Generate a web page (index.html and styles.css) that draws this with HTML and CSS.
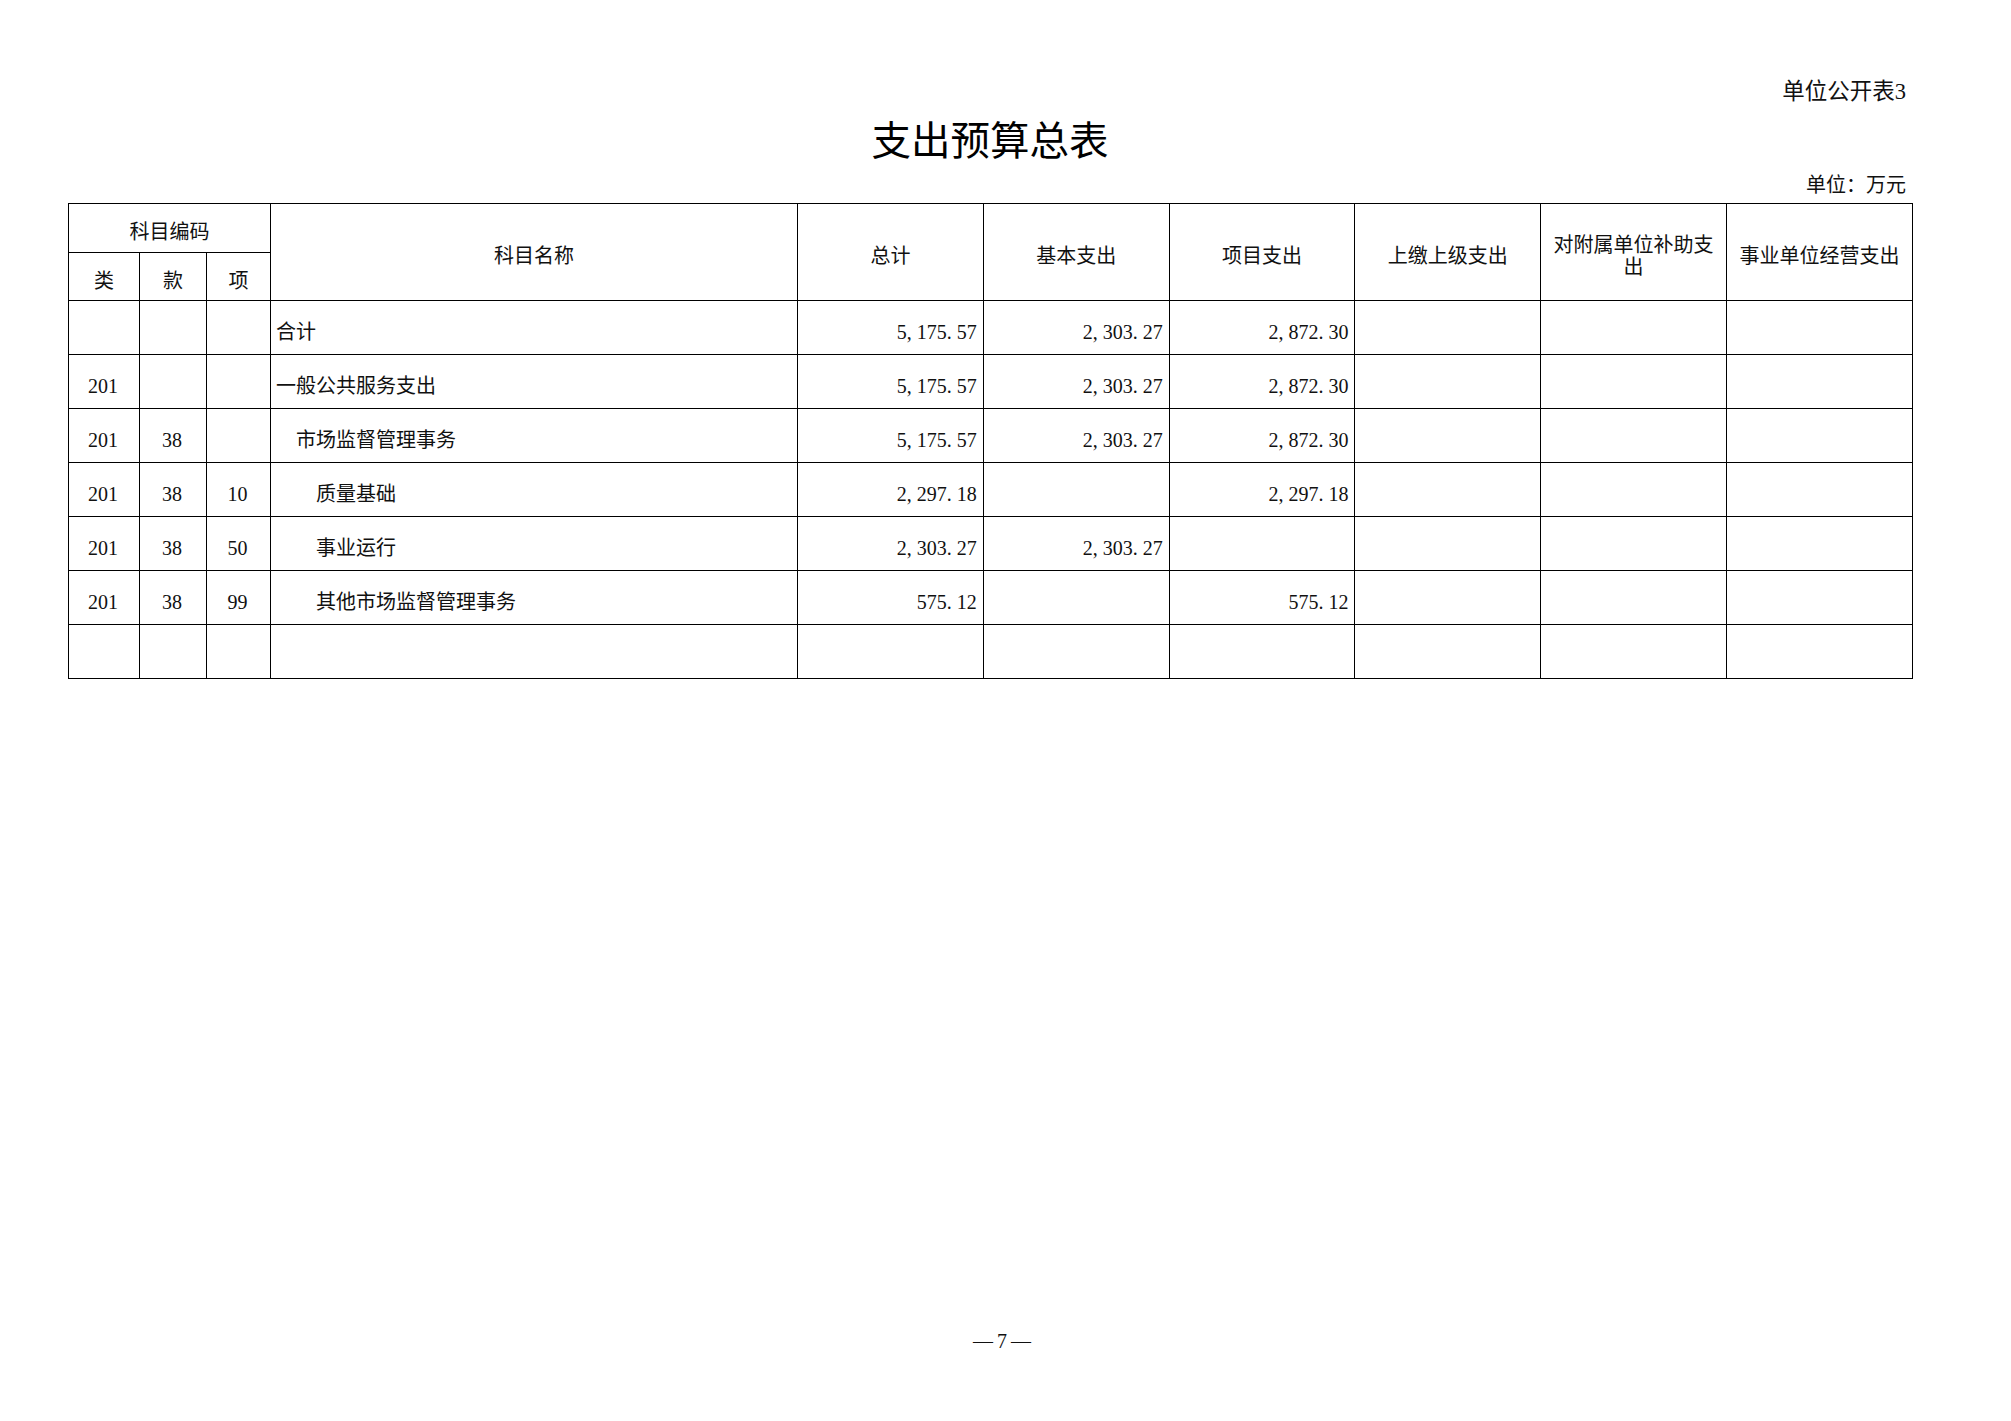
FILE: index.html
```html
<!DOCTYPE html>
<html lang="zh-CN">
<head>
<meta charset="utf-8">
<title>支出预算总表</title>
<link rel="stylesheet" href="styles.css">
</head>
<body>
<div class="page">
  <div class="doc-no">单位公开表3</div>
  <h1 class="title">支出预算总表</h1>
  <div class="unit">单位：万元</div>
  <table class="budget">
    <colgroup>
      <col class="c-lei"><col class="c-kuan"><col class="c-xiang"><col class="c-name">
      <col class="c-num"><col class="c-num"><col class="c-num"><col class="c-num"><col class="c-num"><col class="c-num">
    </colgroup>
    <thead>
      <tr class="hr1">
        <th colspan="3">科目编码</th>
        <th rowspan="2">科目名称</th>
        <th rowspan="2">总计</th>
        <th rowspan="2">基本支出</th>
        <th rowspan="2">项目支出</th>
        <th rowspan="2">上缴上级支出</th>
        <th rowspan="2" class="wrap">对附属单位补助支出</th>
        <th rowspan="2">事业单位经营支出</th>
      </tr>
      <tr class="hr2">
        <th>类</th><th>款</th><th>项</th>
      </tr>
    </thead>
    <tbody>
      <tr>
        <td class="code"></td><td class="code"></td><td class="code"></td>
        <td class="name l0">合计</td>
        <td class="num">5<span class="pu">,</span>175<span class="pu">.</span>57</td>
        <td class="num">2<span class="pu">,</span>303<span class="pu">.</span>27</td>
        <td class="num">2<span class="pu">,</span>872<span class="pu">.</span>30</td>
        <td class="num"></td><td class="num"></td><td class="num"></td>
      </tr>
      <tr>
        <td class="code">201</td><td class="code"></td><td class="code"></td>
        <td class="name l0">一般公共服务支出</td>
        <td class="num">5<span class="pu">,</span>175<span class="pu">.</span>57</td>
        <td class="num">2<span class="pu">,</span>303<span class="pu">.</span>27</td>
        <td class="num">2<span class="pu">,</span>872<span class="pu">.</span>30</td>
        <td class="num"></td><td class="num"></td><td class="num"></td>
      </tr>
      <tr>
        <td class="code">201</td><td class="code">38</td><td class="code"></td>
        <td class="name l1">市场监督管理事务</td>
        <td class="num">5<span class="pu">,</span>175<span class="pu">.</span>57</td>
        <td class="num">2<span class="pu">,</span>303<span class="pu">.</span>27</td>
        <td class="num">2<span class="pu">,</span>872<span class="pu">.</span>30</td>
        <td class="num"></td><td class="num"></td><td class="num"></td>
      </tr>
      <tr>
        <td class="code">201</td><td class="code">38</td><td class="code">10</td>
        <td class="name l2">质量基础</td>
        <td class="num">2<span class="pu">,</span>297<span class="pu">.</span>18</td>
        <td class="num"></td>
        <td class="num">2<span class="pu">,</span>297<span class="pu">.</span>18</td>
        <td class="num"></td><td class="num"></td><td class="num"></td>
      </tr>
      <tr>
        <td class="code">201</td><td class="code">38</td><td class="code">50</td>
        <td class="name l2">事业运行</td>
        <td class="num">2<span class="pu">,</span>303<span class="pu">.</span>27</td>
        <td class="num">2<span class="pu">,</span>303<span class="pu">.</span>27</td>
        <td class="num"></td>
        <td class="num"></td><td class="num"></td><td class="num"></td>
      </tr>
      <tr>
        <td class="code">201</td><td class="code">38</td><td class="code">99</td>
        <td class="name l2">其他市场监督管理事务</td>
        <td class="num">575<span class="pu">.</span>12</td>
        <td class="num"></td>
        <td class="num">575<span class="pu">.</span>12</td>
        <td class="num"></td><td class="num"></td><td class="num"></td>
      </tr>
      <tr>
        <td class="code"></td><td class="code"></td><td class="code"></td>
        <td class="name"></td>
        <td class="num"></td><td class="num"></td><td class="num"></td>
        <td class="num"></td><td class="num"></td><td class="num"></td>
      </tr>
    </tbody>
  </table>
  <div class="footer">—7—</div>
</div>
</body>
</html>
```

FILE: styles.css
```css
html, body {
  margin: 0;
  padding: 0;
  background: #fff;
}

body {
  font-family: "Liberation Serif", "Noto Sans CJK SC", serif;
  color: #111;
}

.page {
  width: 2011px;
  height: 1421px;
  box-sizing: border-box;
  padding: 77px 99px 0 68px;
  display: flex;
  flex-direction: column;
}

.doc-no {
  font-size: 22.5px;
  line-height: 30px;
  height: 30px;
  text-align: right;
  padding-right: 6px;
}

.title {
  margin: 6px 0 0;
  font-family: "Noto Sans CJK SC", sans-serif;
  font-weight: 400;
  font-size: 39.5px;
  line-height: 50px;
  height: 50px;
  text-align: center;
  color: #000;
}

.unit {
  margin-top: 9px;
  font-size: 20px;
  line-height: 26px;
  height: 26px;
  text-align: right;
  padding-right: 6px;
}

.budget {
  margin-top: 5px;
  width: 1844px;
  table-layout: fixed;
  border-collapse: collapse;
  font-size: 20px;
  line-height: 22px;
}

.c-lei { width: 71px; }
.c-kuan { width: 67px; }
.c-xiang { width: 64px; }
.c-name { width: 527px; }
.c-num { width: 185.8px; }

.budget th,
.budget td {
  border: 1px solid #000;
  padding: 8px 4px 0;
  vertical-align: middle;
  font-weight: 400;
  overflow: hidden;
}

.budget th {
  text-align: center;
}

.hr1 { height: 49px; }
.hr2 { height: 48px; }
.budget tbody tr { height: 54px; }

.budget td.code {
  text-align: center;
  padding-left: 2px;
  padding-right: 4px;
}

.budget td.name {
  text-align: left;
  white-space: nowrap;
}

.budget td.l0 { padding-left: 5px; }
.budget td.l1 { padding-left: 25px; }
.budget td.l2 { padding-left: 45px; }

.budget td.num {
  text-align: right;
  padding-right: 6px;
  white-space: nowrap;
}

.pu {
  display: inline-block;
  width: 10px;
  text-align: left;
}

.footer {
  margin-top: auto;
  margin-bottom: 68px;
  font-size: 20px;
  line-height: 24px;
  text-align: center;
  letter-spacing: 4px;
  padding-left: 28px;
}
```
